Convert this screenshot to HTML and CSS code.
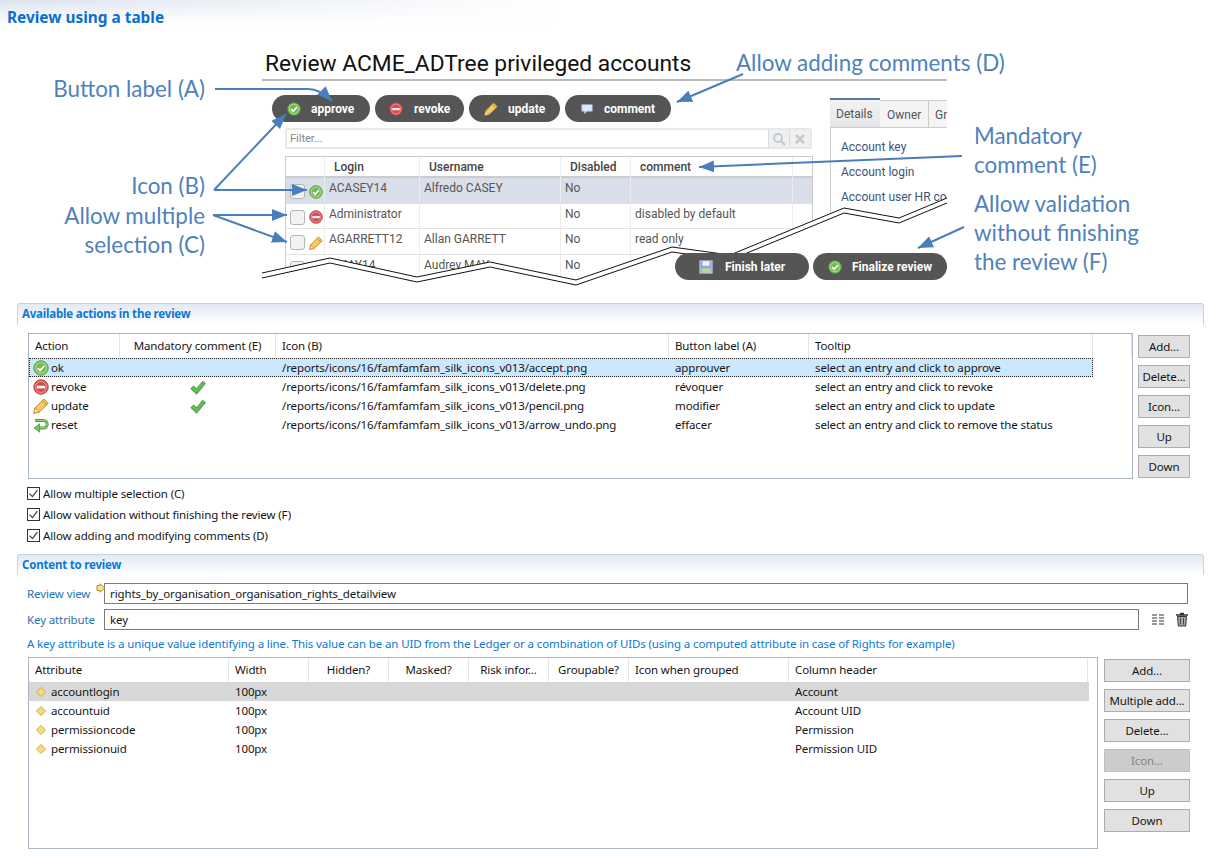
FILE: index.html
```html
<!DOCTYPE html>
<html>
<head>
  <meta charset="UTF-8">
  <title>Review using a table</title>
  <link rel="stylesheet" href="styles.css">
</head>
<body>
  <!-- shared icons -->
  <svg class="defs" width="0" height="0">
    <defs>
      <symbol id="i-accept" viewBox="0 0 16 16">
        <circle cx="8" cy="8" r="7.2" fill="#8ccb6a" stroke="#4f9a3a"/>
        <circle cx="8" cy="8" r="5.2" fill="#6fb84e" stroke="#b5e09c" stroke-width=".8"/>
        <path d="M4.8 8.2l2.3 2.3 4.2-4.6" fill="none" stroke="#fff" stroke-width="1.9"/>
      </symbol>
      <symbol id="i-delete" viewBox="0 0 16 16">
        <circle cx="8" cy="8" r="7.2" fill="#e8666a" stroke="#b23c3c"/>
        <circle cx="8" cy="8" r="5.4" fill="#d9484e" stroke="#f2a0a0" stroke-width=".7"/>
        <rect x="3.8" y="6.8" width="8.4" height="2.6" fill="#fff"/>
      </symbol>
      <symbol id="i-pencil" viewBox="0 0 16 16">
        <path d="M.8 15.2l1.2-5.2L10.8 1l4.4 4.4-9.2 8.8z" fill="#f3cd62" stroke="#b9832b"/>
        <path d="M.8 15.2l1.2-5.2 4 4.2z" fill="#f6e3b8" stroke="#b9832b" stroke-width=".7"/>
        <path d="M9.6 3l3.6 3.6" stroke="#e8a23a" stroke-width="1.6"/>
      </symbol>
      <symbol id="i-undo" viewBox="0 0 16 16">
        <path d="M2 3.5h8.5a3.7 3.7 0 0 1 0 7.4H6" fill="none" stroke="#4c9a3e" stroke-width="3"/>
        <path d="M2 3.5h8.5a3.7 3.7 0 0 1 0 7.4H6" fill="none" stroke="#9ad67f" stroke-width="1.2"/>
        <path d="M6.6 6.8v8.4L1 11z" fill="#7cc05e" stroke="#4c9a3e" stroke-width=".8"/>
      </symbol>
      <symbol id="i-tick" viewBox="0 0 16 16">
        <path d="M.8 8.6l3-2.6 2.6 3L12.6 1.4l2.8 2.2-8.8 10.6z" fill="#62c052" stroke="#2f7f35" stroke-width=".8"/>
      </symbol>
      <symbol id="i-diamond" viewBox="0 0 16 16">
        <path d="M8 2L14 8 8 14 2 8z" fill="#f7dc7c" stroke="#cf9f3a" stroke-width="1.2"/>
      </symbol>
      <symbol id="i-check" viewBox="0 0 13 13">
        <rect x=".5" y=".5" width="12" height="12" fill="#fff" stroke="#333"/>
        <path d="M2.6 6.6l2.8 3 5-6.4" fill="none" stroke="#444" stroke-width="1.3"/>
      </symbol>
      <symbol id="i-bubble" viewBox="0 0 16 16">
        <path d="M2 3h12v7.5H8L5 13.5v-3H2z" fill="#dbe8fb" stroke="#9db8e0" stroke-width=".8"/>
      </symbol>
      <symbol id="i-disk" viewBox="0 0 16 16">
        <rect x="1" y="1" width="14" height="14" fill="#8fa8e0" stroke="#c4d2f2"/>
        <rect x="4" y="1.5" width="8" height="5" fill="#eef2fb"/>
        <rect x="3" y="9.5" width="10" height="5" fill="#bcd98c"/>
      </symbol>
    </defs>
  </svg>

  <div class="figure">
    <h1 class="page-title">Review using a table</h1>

    <!-- screenshot of the review page -->
    <div class="shot">
      <div class="shot-title">Review ACME_ADTree privileged accounts</div>
      <div class="shot-body">
        <div class="shot-left">
          <div class="pill-row">
            <span class="pill pill-approve"><svg class="pill-icon"><use href="#i-accept"/></svg>approve</span>
            <span class="pill pill-revoke"><svg class="pill-icon"><use href="#i-delete"/></svg>revoke</span>
            <span class="pill pill-update"><svg class="pill-icon"><use href="#i-pencil"/></svg>update</span>
            <span class="pill pill-comment"><svg class="pill-icon"><use href="#i-bubble"/></svg>comment</span>
          </div>
          <div class="filter">
            <span class="filter-text">Filter...</span>
            <span class="filter-btn">
              <svg width="14" height="14" viewBox="0 0 14 14"><circle cx="6" cy="6" r="4" fill="none" stroke="#c3ccd6" stroke-width="2"/><path d="M9 9l4 4" stroke="#c3ccd6" stroke-width="2.4"/></svg>
            </span>
            <span class="filter-btn">
              <svg width="12" height="12" viewBox="0 0 12 12"><path d="M2 2l8 8M10 2l-8 8" stroke="#c3ccd6" stroke-width="2.6"/></svg>
            </span>
          </div>
          <div class="mock-table">
            <div class="mock-row mock-head">
              <span></span><span>Login</span><span>Username</span><span>Disabled</span><span>comment</span><span></span>
            </div>
            <div class="mock-row mock-selected">
              <span class="mock-mark"><i class="mock-box"></i><svg class="mock-icon"><use href="#i-accept"/></svg></span>
              <span>ACASEY14</span><span>Alfredo CASEY</span><span>No</span><span></span><span></span>
            </div>
            <div class="mock-row">
              <span class="mock-mark"><i class="mock-box"></i><svg class="mock-icon"><use href="#i-delete"/></svg></span>
              <span>Administrator</span><span></span><span>No</span><span>disabled by default</span><span></span>
            </div>
            <div class="mock-row">
              <span class="mock-mark"><i class="mock-box"></i><svg class="mock-icon"><use href="#i-pencil"/></svg></span>
              <span>AGARRETT12</span><span>Allan GARRETT</span><span>No</span><span>read only</span><span></span>
            </div>
            <div class="mock-row">
              <span class="mock-mark"><i class="mock-box"></i></span>
              <span>AMAY14</span><span>Audrey MAY</span><span>No</span><span></span><span></span>
            </div>
          </div>
        </div>
        <div class="shot-right">
          <div class="tabs">
            <span class="tab tab-active">Details</span>
            <span class="tab tab-owner">Owner</span>
            <span class="tab tab-cut">Gr</span>
          </div>
          <div class="tab-panel">
            <div>Account key</div>
            <div>Account login</div>
            <div>Account user HR co</div>
          </div>
        </div>
      </div>
    </div>

    <!-- torn edge -->
    <svg class="overlay" width="1208" height="303">
      <path d="M262 273L330 258 417 277 490 262 576 280 672 247 730 255 844 208 899 218 947 198V303H262z" fill="#fff"/>
      <path d="M262 273L330 258 417 277 490 262 576 280 672 247 730 255 844 208 899 218 947 198" fill="none" stroke="#111"/>
      <path d="M262 278L330 263 417 282 490 267 576 285 672 252 730 260 844 213 899 223 947 203" fill="none" stroke="#111"/>
    </svg>

    <div class="finish-row">
      <span class="pill pill-later"><svg class="pill-icon"><use href="#i-disk"/></svg>Finish later</span>
      <span class="pill pill-final"><svg class="pill-icon"><use href="#i-accept"/></svg>Finalize review</span>
    </div>

    <!-- callouts -->
    <svg class="overlay" width="1208" height="303">
      <defs>
        <marker id="head" markerUnits="userSpaceOnUse" markerWidth="16" markerHeight="12" refX="15" refY="6" orient="auto">
          <path d="M0 0L15 6 0 12z" fill="#4a7ebb"/>
        </marker>
      </defs>
      <g fill="none" stroke="#4a7ebb" stroke-width="2" marker-end="url(#head)">
        <path d="M215 89H308Q320 89 332 101"/>
        <path d="M214 190L286 114"/>
        <path d="M214 190H307"/>
        <path d="M213 215H287"/>
        <path d="M213 215L287 242"/>
        <path d="M743 74L677 102"/>
        <path d="M962 156L699 167"/>
        <path d="M964 227L918 248"/>
      </g>
    </svg>
    <div class="note note-a">Button label (A)</div>
    <div class="note note-b">Icon (B)</div>
    <div class="note note-c">Allow multiple<br>selection (C)</div>
    <div class="note note-d">Allow adding comments (D)</div>
    <div class="note note-e">Mandatory<br>comment (E)</div>
    <div class="note note-f">Allow validation<br>without finishing<br>the review (F)</div>
  </div>

  <section class="section">
    <h2 class="section-title">Available actions in the review</h2>
    <div class="table-wrap">
      <div class="grid grid-actions">
        <div class="row row-head">
          <span>Action</span><span class="center">Mandatory comment (E)</span><span>Icon (B)</span><span>Button label (A)</span><span>Tooltip</span><span></span>
        </div>
        <div class="row row-focus">
          <span class="name"><svg class="icon"><use href="#i-accept"/></svg>ok</span><span></span><span>/reports/icons/16/famfamfam_silk_icons_v013/accept.png</span><span>approuver</span><span>select an entry and click to approve</span>
        </div>
        <div class="row">
          <span class="name"><svg class="icon"><use href="#i-delete"/></svg>revoke</span><span class="center"><svg class="icon"><use href="#i-tick"/></svg></span><span>/reports/icons/16/famfamfam_silk_icons_v013/delete.png</span><span>révoquer</span><span>select an entry and click to revoke</span>
        </div>
        <div class="row">
          <span class="name"><svg class="icon"><use href="#i-pencil"/></svg>update</span><span class="center"><svg class="icon"><use href="#i-tick"/></svg></span><span>/reports/icons/16/famfamfam_silk_icons_v013/pencil.png</span><span>modifier</span><span>select an entry and click to update</span>
        </div>
        <div class="row">
          <span class="name"><svg class="icon"><use href="#i-undo"/></svg>reset</span><span></span><span>/reports/icons/16/famfamfam_silk_icons_v013/arrow_undo.png</span><span>effacer</span><span>select an entry and click to remove the status</span>
        </div>
      </div>
      <div class="side-btns side-small">
        <button class="btn">Add...</button>
        <button class="btn">Delete...</button>
        <button class="btn">Icon...</button>
        <button class="btn">Up</button>
        <button class="btn">Down</button>
      </div>
    </div>
    <div class="checks">
      <div class="check"><svg class="check-box"><use href="#i-check"/></svg>Allow multiple selection (C)</div>
      <div class="check"><svg class="check-box"><use href="#i-check"/></svg>Allow validation without finishing the review (F)</div>
      <div class="check"><svg class="check-box"><use href="#i-check"/></svg>Allow adding and modifying comments (D)</div>
    </div>
  </section>

  <section class="section section-content">
    <h2 class="section-title">Content to review</h2>
    <div class="form-row">
      <label class="form-label">Review view</label>
      <svg class="req" width="10" height="10" viewBox="0 0 10 10"><path d="M1 2.5h3V.8L8.8 5 4 9.2V7.5H1z" fill="#f4e2a4" stroke="#b98a1e"/></svg>
      <div class="input input-long">rights_by_organisation_organisation_rights_detailview</div>
    </div>
    <div class="form-row">
      <label class="form-label">Key attribute</label>
      <div class="input input-short">key</div>
      <svg class="tool-list" width="13" height="12" viewBox="0 0 13 12">
        <path d="M0 1h5M0 4h5M0 7h5M0 10h5M7 1h5M7 4h5M7 7h5M7 10h5" stroke="#333" stroke-width="1.2"/>
      </svg>
      <svg class="tool-trash" width="14" height="15" viewBox="0 0 14 15">
        <path d="M5 1.5h4M1 3h12" stroke="#333" stroke-width="1.6"/>
        <path d="M2.5 4.5h9l-.8 9.5H3.3z" fill="#a9a9a9" stroke="#333"/>
        <path d="M5.5 6v6.5M8.5 6v6.5" stroke="#444"/>
      </svg>
    </div>
    <p class="hint">A key attribute is a unique value identifying a line. This value can be an UID from the Ledger or a combination of UIDs (using a computed attribute in case of Rights for example)</p>
    <div class="table-wrap table-wrap-attrs">
      <div class="grid grid-attrs">
        <div class="row row-head">
          <span>Attribute</span><span>Width</span><span class="center">Hidden?</span><span class="center">Masked?</span><span class="center">Risk infor...</span><span class="center">Groupable?</span><span>Icon when grouped</span><span>Column header</span>
        </div>
        <div class="row row-grey">
          <span class="name"><svg class="icon icon-small"><use href="#i-diamond"/></svg>accountlogin</span><span>100px</span><span></span><span></span><span></span><span></span><span></span><span>Account</span>
        </div>
        <div class="row">
          <span class="name"><svg class="icon icon-small"><use href="#i-diamond"/></svg>accountuid</span><span>100px</span><span></span><span></span><span></span><span></span><span></span><span>Account UID</span>
        </div>
        <div class="row">
          <span class="name"><svg class="icon icon-small"><use href="#i-diamond"/></svg>permissioncode</span><span>100px</span><span></span><span></span><span></span><span></span><span></span><span>Permission</span>
        </div>
        <div class="row">
          <span class="name"><svg class="icon icon-small"><use href="#i-diamond"/></svg>permissionuid</span><span>100px</span><span></span><span></span><span></span><span></span><span></span><span>Permission UID</span>
        </div>
      </div>
      <div class="side-btns side-wide">
        <button class="btn">Add...</button>
        <button class="btn">Multiple add...</button>
        <button class="btn">Delete...</button>
        <button class="btn btn-off">Icon...</button>
        <button class="btn">Up</button>
        <button class="btn">Down</button>
      </div>
    </div>
  </section>
</body>
</html>
```

FILE: styles.css
```css
html, body {
  margin:0; padding:0;
  width:1208px; height:856px;
  overflow:hidden;
  background:#fff;
  font-family:"Noto Sans", sans-serif;
  font-size:11.5px;
  letter-spacing:-.12px;
  color:#151515;
}
.defs { position:absolute; }

/* top picture */
.figure {
  position:relative;
  height:303px;
  letter-spacing:0;
}
.page-title {
  margin:0;
  height:25px;
  padding:8px 0 0 7px;
  box-sizing:border-box;
  font-size:15.4px;
  line-height:20px;
  font-weight:bold;
  color:#0a6fd0;
  background:
    linear-gradient(to right, rgba(255,255,255,0) 0, #fff 555px),
    linear-gradient(#dce3ef, #fff);
}
.overlay {
  position:absolute;
  top:0; left:0;
  pointer-events:none;
}
.note {
  position:absolute;
  font-family:Lato, sans-serif;
  font-size:22.4px;
  line-height:29px;
  color:#4f81bd;
  white-space:nowrap;
}
.note-a, .note-b, .note-c { right:1003px; text-align:right; }
.note-a { top:74px; }
.note-b { top:171px; }
.note-c { top:201px; }
.note-d { top:48px; left:736px; }
.note-e { top:121px; left:974px; }
.note-f { top:189px; left:974px; }

/* the review page shown in the picture */
.shot {
  position:absolute;
  top:48px; left:262px;
  width:685px; height:235px;
  overflow:hidden;
  font-family:Roboto, sans-serif;
  font-size:12px;
  color:#555;
}
.shot-title {
  height:31px;
  font-size:22.75px;
  line-height:31px;
  padding-left:3px;
  color:#111;
  border-bottom:2px solid #bbb;
}
.shot-body {
  display:flex;
  padding-top:14px;
}
.shot-left {
  width:551px;
  flex:none;
  padding-left:10px;
  box-sizing:border-box;
}
.pill-row {
  display:flex;
  gap:5px;
  margin-bottom:6px;
}
.pill {
  display:flex;
  align-items:center;
  height:27px;
  box-sizing:border-box;
  border-radius:14px;
  background:#555;
  color:#fff;
  font-family:Roboto, sans-serif;
  font-size:12px;
  font-weight:bold;
}
.pill-icon { width:14px; height:14px; flex:none; }
.pill-approve { width:98px; padding-left:15px; }
.pill-approve .pill-icon { margin-right:10px; }
.pill-revoke { width:89px; padding-left:14px; }
.pill-revoke .pill-icon { margin-right:11px; }
.pill-update { width:91px; padding-left:15px; }
.pill-update .pill-icon { margin-right:10px; }
.pill-comment { width:106px; padding-left:15px; }
.pill-comment .pill-icon { margin-right:10px; }
.filter {
  display:flex;
  align-items:center;
  margin-left:13px;
  width:527px; height:21px;
  box-sizing:border-box;
  border:2px solid #e8e8e8;
  border-radius:2px;
  color:#888;
  font-size:11px;
  margin-bottom:7px;
}
.filter-text { flex:1; padding-left:3px; }
.filter-btn {
  display:flex;
  align-items:center;
  justify-content:center;
  width:20px; height:100%;
  background:#f0f0f0;
  border-left:1px solid #ddd;
}
.mock-table {
  margin-left:13px;
  width:528px;
  box-sizing:border-box;
  border:1px solid #ccc;
  border-bottom:0;
}
.mock-row {
  display:grid;
  grid-template-columns:39px 95px 141px 70px 162px 1fr;
  height:25.5px;
  align-items:stretch;
  border-bottom:1px solid #e2e2e2;
  box-sizing:border-box;
  line-height:20px;
}
.mock-row > span {
  border-right:1px solid #ececec;
  padding-left:4px;
}
.mock-row > span:last-child { border-right:0; }
.mock-head {
  height:21px;
  line-height:21px;
  font-weight:500;
  color:#444;
  border-bottom:2px solid #ccc;
}
.mock-head > span { padding-left:9px; }
.mock-selected { background:#d9dfea; }
.mock-row > .mock-mark {
  display:flex;
  align-items:center;
  gap:4px;
  padding:3px 0 0 4px;
}
.mock-box {
  display:block;
  width:15px; height:15px;
  box-sizing:border-box;
  border:1.5px solid #b5b5b5;
  border-radius:3px;
  background:#f2f2f2;
  flex:none;
}
.mock-icon { width:14px; height:14px; flex:none; }
.shot-right {
  width:117px;
  flex:none;
  margin-left:17px;
  padding-top:3px;
  overflow:hidden;
}
.tabs {
  display:flex;
  height:30px;
}
.tab {
  flex:none;
  box-sizing:border-box;
  border:1px solid #ccc;
  border-left:0;
  padding:0 6px;
  line-height:29px;
  background:#f4f4f4;
  margin-top:2px;
}
.tab-active {
  width:50px;
  margin-top:0;
  padding:0 6px;
  border:0;
  border-top:2px solid #5577ae;
  background:linear-gradient(#f2f2f2, #e6e6e6);
  border-bottom:1px solid #ccc;
}
.tab-owner { width:49px; padding-left:7px; }
.tab-cut { flex:1; }
.tab-panel {
  border-left:1px solid #ccc;
  height:90px;
  padding:7px 0 0 10px;
  color:#3d5478;
  line-height:25px;
  white-space:nowrap;
}
.finish-row {
  position:absolute;
  top:253px; left:675px;
  display:flex;
  gap:4px;
}
.pill-later { width:134px; padding-left:24px; }
.pill-later .pill-icon { margin-right:12px; }
.pill-final { width:134px; padding-left:15px; }
.pill-final .pill-icon { margin-right:10px; }

/* form sections */
.section {
  margin:0 4px 0 17px;
  padding:0 0 0 10px;
}
.section-title {
  margin:0 0 8px -10px;
  height:22px;
  box-sizing:border-box;
  padding:1px 0 0 4px;
  font-size:11.5px;
  line-height:18px;
  font-weight:bold;
  letter-spacing:-.2px;
  color:#0a78d8;
  border:1px solid #c6d4e2;
  border-bottom:0;
  border-radius:3px 3px 0 0;
  background:linear-gradient(#e3e9f3, #fff);
}
.section-content { margin-top:8px; }
.section-content .section-title { height:21px; }
.table-wrap {
  display:flex;
  align-items:flex-start;
  margin-left:1px;
}
.grid {
  flex:none;
  box-sizing:border-box;
  border:1px solid #a9b5c0;
}
.grid-actions {
  width:1105px; height:146px;
}
.grid-attrs {
  width:1070px; height:192px;
}
.row {
  display:grid;
  height:19px;
  line-height:19px;
  align-items:stretch;
}
.row > span {
  padding-left:6px;
  white-space:nowrap;
  overflow:hidden;
}
.grid-actions .row { grid-template-columns:91px 156px 393px 140px 284px 1fr; }
.grid-attrs .row { grid-template-columns:200px 80px 80px 80px 80px 80px 160px 299px; }
.row-head {
  height:24px;
  line-height:23px;
}
.row-head > span { border-right:1px solid #e5e5e5; }
.row .center { text-align:center; padding-left:0; }
.row > .name {
  display:flex;
  align-items:center;
  padding-left:4px;
}
.row-focus {
  background:#cce8ff;
  outline:1px dotted #222;
  outline-offset:-1px;
  width:1064px;
}
.grid-attrs .row-grey {
  background:#d8d8d8;
  width:1060px;
}
.icon { width:16px; height:16px; vertical-align:middle; flex:none; }
.name .icon { margin-right:2px; }
.name .icon-small { width:12px; height:12px; margin:0 4px 0 2px; }
.side-btns {
  flex:none;
  display:flex;
  flex-direction:column;
  gap:7px;
  margin:2px 0 0 5px;
}
.side-small { width:52px; }
.side-wide { width:86px; margin-left:6px; }
.btn {
  height:23px;
  padding:0;
  box-sizing:border-box;
  border:1px solid #adadad;
  background:#e1e1e1;
  font-family:"Noto Sans", sans-serif;
  font-size:11.5px;
  letter-spacing:-.12px;
  color:#151515;
}
.btn-off { background:#cccccc; color:#838383; border-color:#bfbfbf; }
.checks { margin-top:4px; }
.check {
  display:flex;
  align-items:center;
  height:21px;
  gap:3px;
}
.check-box { width:13px; height:13px; flex:none; }
.form-row {
  position:relative;
  display:flex;
  align-items:center;
  height:21px;
  margin-bottom:5px;
}
.form-label {
  flex:none;
  width:77px;
  color:#1f74b5;
}
.req {
  position:absolute;
  top:0; left:69px;
}
.input {
  box-sizing:border-box;
  height:21px;
  line-height:19px;
  padding-left:5px;
  border:1px solid #7a7a7a;
}
.input-long { width:1084px; }
.input-short { width:1035px; }
.tool-list { margin-left:13px; flex:none; }
.tool-trash { margin-left:10px; flex:none; }
.hint {
  margin:6px 0 5px;
  height:16px;
  line-height:16px;
  color:#0a78d8;
  white-space:nowrap;
}
```
